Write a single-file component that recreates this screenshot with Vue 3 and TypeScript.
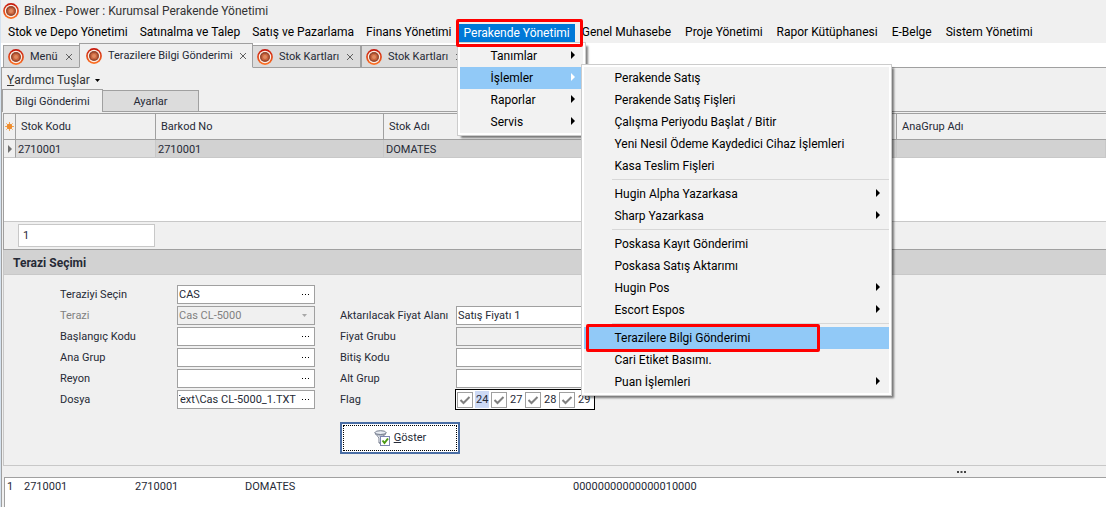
<script setup lang="ts">
import { onMounted, ref } from 'vue'

interface MenuEntry {
  label: string
  sub?: boolean
  active?: boolean
  marked?: boolean
  separator?: boolean
}

const leftMenus = ['Stok ve Depo Yönetimi', 'Satınalma ve Talep', 'Satış ve Pazarlama', 'Finans Yönetimi']
const rightMenus = ['Genel Muhasebe', 'Proje Yönetimi', 'Rapor Kütüphanesi', 'E-Belge', 'Sistem Yönetimi']

const retailMenu: MenuEntry[] = [
  { label: 'Tanımlar', sub: true },
  { label: 'İşlemler', sub: true, active: true },
  { label: 'Raporlar', sub: true },
  { label: 'Servis', sub: true },
]

const operations: MenuEntry[] = [
  { label: 'Perakende Satış' },
  { label: 'Perakende Satış Fişleri' },
  { label: 'Çalışma Periyodu Başlat / Bitir' },
  { label: 'Yeni Nesil Ödeme Kaydedici Cihaz İşlemleri' },
  { label: 'Kasa Teslim Fişleri' },
  { label: 's1', separator: true },
  { label: 'Hugin Alpha Yazarkasa', sub: true },
  { label: 'Sharp Yazarkasa', sub: true },
  { label: 's2', separator: true },
  { label: 'Poskasa Kayıt Gönderimi' },
  { label: 'Poskasa Satış Aktarımı' },
  { label: 'Hugin Pos', sub: true },
  { label: 'Escort Espos', sub: true },
  { label: 's3', separator: true },
  { label: 'Terazilere Bilgi Gönderimi', active: true, marked: true },
  { label: 'Cari Etiket Basımı.' },
  { label: 'Puan İşlemleri', sub: true },
]

const tabs = [
  { id: 1, label: 'Menü', cls: 'tab-menu' },
  { id: 2, label: 'Terazilere Bilgi Gönderimi', cls: 'tab-active' },
  { id: 3, label: 'Stok Kartları', cls: 'tab-stock' },
  { id: 4, label: 'Stok Kartları', cls: 'tab-stock' },
]

const scale = ref('CAS')
const startCode = ref('')
const mainGroup = ref('')
const section = ref('')
const file = ref('Text\\Cas CL-5000_1.TXT')
const fileInput = ref<HTMLInputElement | null>(null)
const priceField = ref('Satış Fiyatı 1')
const priceGroup = ref('')
const endCode = ref('')
const subGroup = ref('')
const flags = ref([
  { code: '24', on: true, focus: true },
  { code: '27', on: true, focus: false },
  { code: '28', on: true, focus: false },
  { code: '29', on: true, focus: false },
])

// Keep the end of a long path in view.
onMounted(() => {
  if (fileInput.value) fileInput.value.scrollLeft = fileInput.value.scrollWidth
})
</script>

<template>
  <div class="window">
    <svg class="defs" width="0" height="0" aria-hidden="true">
      <defs>
        <linearGradient id="ring" x1="0" y1="0" x2="0" y2="1">
          <stop offset="0" stop-color="#c4160c" />
          <stop offset="1" stop-color="#ff7424" />
        </linearGradient>
        <symbol id="logo" viewBox="0 0 16 16">
          <circle cx="8" cy="8" r="7.9" fill="url(#ring)" />
          <circle cx="8" cy="8" r="6.2" fill="#fbeee4" />
          <circle cx="8" cy="8" r="5" fill="#8a4028" />
          <circle cx="8" cy="8" r="3.6" fill="#c9663f" />
          <circle cx="8" cy="8" r="4.2" fill="none" stroke="#b5583a" stroke-width="1" stroke-dasharray="1 1" />
          <circle cx="8" cy="8" r="2" fill="#e08a60" />
        </symbol>
      </defs>
    </svg>

    <header class="titlebar">
      <svg class="logo"><use href="#logo" /></svg>
      <span>Bilnex - Power : Kurumsal Perakende Yönetimi</span>
    </header>

    <nav class="menubar">
      <button v-for="m in leftMenus" :key="m" type="button" class="menu-btn">{{ m }}</button>
      <div class="menu-open">
        <button type="button" class="menu-btn current">Perakende Yönetimi</button>
        <div class="popup popup-main">
          <button v-for="e in retailMenu" :key="e.label" type="button" class="entry" :class="{ active: e.active }">
            <span>{{ e.label }}</span>
            <svg class="arrow" viewBox="0 0 4 8"><path d="M0 0L4 4L0 8Z" /></svg>
          </button>
        </div>
        <div class="popup popup-sub">
          <template v-for="e in operations" :key="e.label">
            <div v-if="e.separator" class="separator"></div>
            <button v-else type="button" class="entry" :class="{ active: e.active }">
              <span>{{ e.label }}</span>
              <svg v-if="e.sub" class="arrow" viewBox="0 0 4 8"><path d="M0 0L4 4L0 8Z" /></svg>
              <i v-if="e.marked" class="mark mark-entry"></i>
            </button>
          </template>
        </div>
        <i class="mark mark-menu"></i>
      </div>
      <div class="menu-rest">
        <button v-for="m in rightMenus" :key="m" type="button" class="menu-btn">{{ m }}</button>
      </div>
    </nav>

    <div class="tabs">
      <div v-for="t in tabs" :key="t.id" class="tab" :class="t.cls">
        <svg class="logo"><use href="#logo" /></svg>
        <span>{{ t.label }}</span>
        <button type="button" class="close" aria-label="Kapat">
          <svg viewBox="0 0 8 8"><path d="M1 1L7 7M7 1L1 7" /></svg>
        </button>
      </div>
    </div>

    <div class="body">
      <div class="toolbar">
        <button type="button" class="helper"><u>Y</u>ardımcı Tuşlar <svg viewBox="0 0 5 3"><path d="M0 0H5L2.500 3Z" /></svg></button>
      </div>

      <div class="subtabs">
        <button type="button" class="subtab on">Bilgi Gönderimi</button>
        <button type="button" class="subtab">Ayarlar</button>
      </div>

      <section class="grid-panel">
        <table>
          <colgroup>
            <col class="c-ind" /><col class="c-code" /><col class="c-bar" /><col class="c-name" /><col />
          </colgroup>
          <thead>
            <tr>
              <th class="ind">
                <svg class="star" viewBox="0 0 9 9">
                  <path d="M4.500 0V9M0 4.500H9M1.300 1.300L7.700 7.700M7.700 1.300L1.300 7.700" stroke="#f2a65a" stroke-width="1" />
                  <circle cx="4.500" cy="4.500" r="2.700" fill="#ee8d2e" />
                </svg>
              </th>
              <th>Stok Kodu</th>
              <th>Barkod No</th>
              <th>Stok Adı</th>
              <th>AnaGrup Adı</th>
            </tr>
          </thead>
          <tbody>
            <tr>
              <td class="ind"><svg class="rowmark" viewBox="0 0 4 8"><path d="M0 0L4 4L0 8Z" /></svg></td>
              <td class="cell-focus">2710001</td>
              <td>2710001</td>
              <td>DOMATES</td>
              <td></td>
            </tr>
          </tbody>
        </table>
        <div class="grid-foot">
          <output class="count">1</output>
        </div>
      </section>

      <section class="group">
        <h2>Terazi Seçimi</h2>
        <form class="form" @submit.prevent>
          <label for="scale">Teraziyi Seçin</label>
          <div class="box"><input id="scale" v-model="scale" type="text" /><button type="button" aria-label="Seç"><svg class="dots" viewBox="0 0 9 1"><path d="M1 0h1v1h-1zM4 0h1v1h-1zM7 0h1v1h-1z" /></svg></button></div>
          <span class="fill"></span>

          <label for="model" class="dim">Terazi</label>
          <div class="box off">
            <select id="model" disabled><option>Cas CL-5000</option></select>
            <svg class="caret" viewBox="0 0 5 3"><path d="M0 0H5L2.500 3Z" /></svg>
          </div>
          <label for="price" class="second">Aktarılacak Fiyat Alanı</label>
          <div class="box"><input id="price" v-model="priceField" type="text" /></div>

          <label for="start">Başlangıç Kodu</label>
          <div class="box"><input id="start" v-model="startCode" type="text" /><button type="button" aria-label="Seç"><svg class="dots" viewBox="0 0 9 1"><path d="M1 0h1v1h-1zM4 0h1v1h-1zM7 0h1v1h-1z" /></svg></button></div>
          <label for="pgroup" class="second">Fiyat Grubu</label>
          <div class="box off"><input id="pgroup" v-model="priceGroup" type="text" disabled /></div>

          <label for="mgroup">Ana Grup</label>
          <div class="box"><input id="mgroup" v-model="mainGroup" type="text" /><button type="button" aria-label="Seç"><svg class="dots" viewBox="0 0 9 1"><path d="M1 0h1v1h-1zM4 0h1v1h-1zM7 0h1v1h-1z" /></svg></button></div>
          <label for="end" class="second">Bitiş Kodu</label>
          <div class="box"><input id="end" v-model="endCode" type="text" /></div>

          <label for="section">Reyon</label>
          <div class="box"><input id="section" v-model="section" type="text" /><button type="button" aria-label="Seç"><svg class="dots" viewBox="0 0 9 1"><path d="M1 0h1v1h-1zM4 0h1v1h-1zM7 0h1v1h-1z" /></svg></button></div>
          <label for="sgroup" class="second">Alt Grup</label>
          <div class="box"><input id="sgroup" v-model="subGroup" type="text" /></div>

          <label for="file">Dosya</label>
          <div class="box"><input id="file" ref="fileInput" v-model="file" type="text" /><button type="button" aria-label="Seç"><svg class="dots" viewBox="0 0 9 1"><path d="M1 0h1v1h-1zM4 0h1v1h-1zM7 0h1v1h-1z" /></svg></button></div>
          <span class="second">Flag</span>
          <div class="flags">
            <label v-for="f in flags" :key="f.code" class="flag">
              <span class="tick">
                <input v-model="f.on" type="checkbox" />
                <svg viewBox="0 0 16 16"><path d="M3.500 8L6.500 11L12.500 5" /></svg>
              </span>
              <span class="code" :class="{ focus: f.focus }">{{ f.code }}</span>
            </label>
          </div>

          <button type="submit" class="show">
            <span class="show-inner">
              <svg class="funnel" viewBox="0 0 16 16">
                <path d="M1 2.500C1 5 5 6.500 5 8V13L8 14V8C8 6.500 12 5 12 2.500Z" fill="#b4bac6" stroke="#737b8c" />
                <ellipse cx="6.500" cy="2.600" rx="5.500" ry="1.900" fill="#e9edf3" stroke="#737b8c" />
                <path d="M4 5.500L6 8V12" fill="none" stroke="#eef0f5" />
                <rect x="6.500" y="6.500" width="9" height="9" fill="#fff" stroke="#7d86b0" />
                <path d="M8.500 10.500L10.500 13L14 8.500" fill="none" stroke="#4a9a12" stroke-width="2" />
              </svg>
              <span><u>G</u>öster</span>
            </span>
          </button>
        </form>
      </section>

      <div class="splitter"><svg class="grip" viewBox="0 0 9 2"><path d="M0 0h2v2h-2zM3.500 0h2v2h-2zM7 0h2v2h-2z" /></svg></div>

      <section class="output">
        <span>1</span><span>2710001</span><span>2710001</span><span>DOMATES</span><span>00000000000000010000</span>
      </section>
    </div>
  </div>
</template>

<style>
html,
body,
#app {
  height: 100%;
}
body {
  margin: 0;
}
</style>

<style scoped>
* {
  box-sizing: border-box;
}
.window {
  display: flex;
  flex-direction: column;
  min-height: 100%;
  overflow: hidden;
  background: #f0f0f0;
  color: #262a36;
  font: 11px/14px Roboto, "Noto Sans", sans-serif;
  border-left: 1px solid #d5e2ef;
}
.defs {
  position: absolute;
}
button,
input,
select {
  font: inherit;
  color: inherit;
  border: 0;
  padding: 0;
  margin: 0;
  background: none;
  border-radius: 0;
}
.logo {
  width: 16px;
  height: 16px;
  flex: none;
}
.titlebar {
  display: flex;
  align-items: center;
  gap: 5px;
  height: 21px;
  padding-left: 2px;
  font-size: 12px;
  line-height: 16px;
  color: #333;
}
.menubar {
  display: flex;
  align-items: stretch;
  gap: 12px;
  height: 22px;
  padding-left: 7px;
  font-size: 12px;
  line-height: 16px;
  color: #000;
}
.menu-btn {
  white-space: nowrap;
}
.menu-rest {
  display: flex;
  gap: 14px;
}
.menu-open {
  position: relative;
  display: flex;
}
.current {
  margin: 3px -5px 1px;
  padding: 0 5px;
  background: #0078d7;
  color: #fff;
}
.popup {
  position: absolute;
  padding: 2px;
  background: #f2f2f2;
  border: 1px solid #ccc;
  outline: 0;
  box-shadow: inset 0 0 0 2px #fff, 3px 3px 2px -1px rgba(0, 0, 0, 0.5);
  z-index: 2;
}
.popup-main {
  top: 21px;
  left: -7px;
  width: 129px;
}
.popup-sub {
  top: 43px;
  left: 117px;
  width: 311px;
  z-index: 3;
}
.entry {
  position: relative;
  display: flex;
  align-items: center;
  justify-content: space-between;
  width: 100%;
  height: 22px;
  padding: 0 9px 0 31px;
  text-align: left;
  white-space: nowrap;
}
.entry.active {
  background: #91c9f7;
}
.arrow {
  width: 4px;
  height: 8px;
  margin-bottom: 2px;
}
.popup-main .arrow {
  margin-right: -1px;
}
.popup-main .active .arrow {
  fill: #fff;
}
.separator {
  height: 6px;
  margin-left: 28px;
  background: linear-gradient(#d7d7d7, #d7d7d7) 0 2px / 100% 1px no-repeat;
}
.mark {
  position: absolute;
  border: 3px solid #f00;
  border-radius: 2px;
  pointer-events: none;
}
.mark-menu {
  top: -2px;
  left: -8px;
  width: 127px;
  height: 28px;
  z-index: 4;
}
.mark-entry {
  top: -3px;
  left: 2px;
  width: 234px;
  height: 28px;
}
.tabs {
  display: flex;
  align-items: flex-end;
  height: 25px;
  padding-left: 2px;
  background: linear-gradient(#a0a0a0, #a0a0a0) 0 24px / 100% 1px no-repeat #fff;
}
.tab {
  display: flex;
  align-items: center;
  height: 23px;
  padding: 0 6px 0 4px;
  gap: 6px;
  background: #dcdcdc;
  border: 1px solid #a0a0a0;
  white-space: nowrap;
}
.tab-menu {
  width: 77px;
}
.tab-active {
  width: 174px;
  height: 25px;
  margin: 0 -1px;
  padding: 0 7px 0 6px;
  background: #f0f0f0;
  border-bottom-color: #f0f0f0;
  z-index: 1;
}
.tab-stock {
  width: 109px;
}
.close {
  width: 8px;
  height: 8px;
  margin-left: auto;
  display: flex;
}
.close svg {
  width: 8px;
  height: 8px;
  stroke: #606060;
  stroke-width: 1;
}
.body {
  flex: 1;
  display: flex;
  flex-direction: column;
  border-left: 1px solid #a0a0a0;
}
.toolbar {
  height: 21px;
  padding: 4px 0 0 5px;
  font-size: 12px;
  line-height: 16px;
  color: #333;
}
.helper {
  display: flex;
  align-items: center;
  white-space: pre;
}
.helper svg {
  width: 5px;
  height: 3px;
  margin-left: 2px;
}
.subtabs {
  display: flex;
  align-items: flex-end;
  height: 23px;
  border-bottom: 1px solid #a0a0a0;
}
.subtab {
  width: 96px;
  height: 21px;
  padding-top: 2px;
  border: 1px solid #a0a0a0;
  border-left: 0;
  border-bottom: 0;
  background: #dcdcdc;
}
.subtab.on {
  width: 101px;
  height: 23px;
  margin-bottom: -1px;
  border-left: 1px solid #a0a0a0;
  background: #f0f0f0;
}
.grid-panel {
  margin: 1px 0 0 1px;
  border: solid #a0a0a0;
  border-width: 1px 0 1px 1px;
  background: #fff;
  display: flex;
  flex-direction: column;
  height: 137px;
}
table {
  width: 100%;
  table-layout: fixed;
  border-collapse: separate;
  border-spacing: 0;
}
.c-ind {
  width: 12px;
}
.c-code {
  width: 140px;
}
.c-bar {
  width: 228px;
}
.c-name {
  width: 513px;
}
th {
  height: 26px;
  padding: 0 5px;
  font-weight: 400;
  text-align: left;
  background: #f0f0f0;
  border: solid #a0a0a0;
  border-width: 0 1px 1px 0;
}
th:last-child {
  border-right: 0;
}
td {
  height: 18px;
  padding: 2px 2px 0;
  background: #d2d2d2;
  border: solid #c8c8c8;
  border-width: 0 1px 1px 0;
}
.cell-focus {
  background: #dcdcdc;
}
.ind {
  padding: 0;
  background: #f0f0f0;
  border-right-color: #a0a0a0;
  text-align: center;
}
.star {
  display: block;
  width: 9px;
  height: 9px;
  margin: 0 auto;
}
.rowmark {
  display: block;
  width: 4px;
  height: 8px;
  margin: 0 auto;
  fill: #707070;
}
.grid-foot {
  margin-top: auto;
  padding: 2px 0 2px 14px;
  background: #f0f0f0;
  border-top: 1px solid #c8c8c8;
}
.count {
  display: block;
  width: 137px;
  height: 23px;
  padding: 4px;
  background: #fff;
  border: 1px solid #c8c8c8;
}
.group {
  margin-left: 1px;
  border: solid #c8c8c8;
  border-width: 0 0 1px 1px;
}
h2 {
  margin: 0;
  height: 25px;
  padding-left: 9px;
  font-size: 12px;
  line-height: 26px;
  background: #d2d2d2;
  border-bottom: 1px solid #c8c8c8;
}
.form {
  display: grid;
  grid-template-columns: 117px 138px 25px 116px 138px;
  grid-auto-rows: 19px;
  gap: 2px 0;
  align-items: center;
  padding: 10px 0 35px 56px;
}
.form > label {
  grid-column: 1;
}
.form > .second {
  grid-column: 4;
}
.fill {
  grid-column: 3 / 6;
}
.dim {
  color: #808080;
}
.box {
  display: flex;
  align-items: center;
  height: 19px;
  background: #fff;
  border: 1px solid #a0a0a0;
}
.box input,
.box select {
  flex: 1;
  min-width: 0;
  width: 0;
  height: 17px;
  padding: 0 1px;
  outline: 0;
  appearance: none;
  opacity: 1;
}
.off {
  background: #f0f0f0;
  color: #808080;
}
.box button {
  display: flex;
  align-items: center;
  width: 13px;
  height: 17px;
  margin-left: 4px;
}
.dots {
  width: 9px;
  height: 1px;
}
.caret {
  width: 5px;
  height: 3px;
  margin-right: 7px;
  fill: #a8a8a8;
}
.flags {
  display: flex;
  align-items: center;
  width: 140px;
  height: 21px;
  margin-left: -1px;
  padding: 1px;
  background: #fff;
  border: 1px solid #000;
}
.flag {
  display: flex;
  align-items: center;
  width: 34px;
}
.tick {
  display: grid;
  width: 16px;
  height: 16px;
  flex: none;
}
.tick input,
.tick svg {
  grid-area: 1 / 1;
  width: 16px;
  height: 16px;
}
.tick input {
  appearance: none;
  border: 1px solid #a0a0a0;
}
.tick svg {
  fill: none;
  stroke: #808080;
  stroke-width: 2;
  pointer-events: none;
}
.code {
  margin-left: 2px;
  padding: 1px;
  line-height: 15px;
}
.code.focus {
  background: #ccd9f5;
}
.show {
  grid-column: 4 / 6;
  width: 120px;
  height: 32px;
  margin-top: 11px;
  align-self: start;
  padding: 1px;
  background: #fff;
  border: 2px solid #4a6ea5;
}
.show-inner {
  display: flex;
  align-items: center;
  justify-content: center;
  gap: 4px;
  height: 100%;
  border: 1px dotted #000;
}
.funnel {
  width: 16px;
  height: 16px;
}
.splitter {
  display: flex;
  align-items: center;
  height: 11px;
  padding-left: 955px;
}
.grip {
  width: 9px;
  height: 2px;
  fill: #444;
}
.output {
  flex: 1;
  display: grid;
  grid-template-columns: 17px 111px 110px 328px auto;
  margin-left: 2px;
  padding: 2px;
  background: #fff;
  border: solid #a0a0a0;
  border-width: 1px 0 0 1px;
}
</style>
